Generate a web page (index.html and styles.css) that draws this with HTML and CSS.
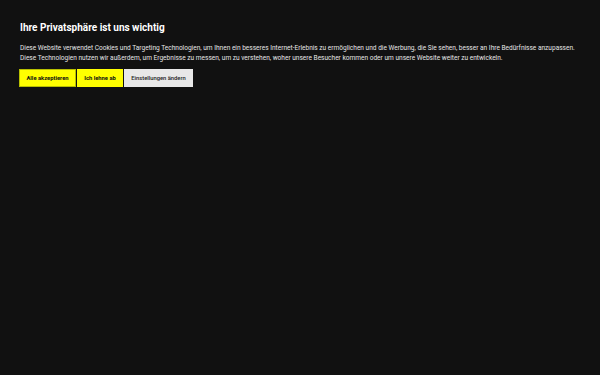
FILE: index.html
```html
<!DOCTYPE html>
<html lang="de">
<head>
<meta charset="utf-8">
<link rel="stylesheet" href="styles.css">
</head>
<body>
<div class="banner">
  <h1 class="title">Ihre Privatsphäre ist uns wichtig</h1>
  <p class="text">Diese Website verwendet Cookies und Targeting Technologien, um Ihnen ein besseres Internet-Erlebnis zu ermöglichen und die Werbung, die Sie sehen, besser an Ihre Bedürfnisse anzupassen.<br>Diese Technologien nutzen wir außerdem, um Ergebnisse zu messen, um zu verstehen, woher unsere Besucher kommen oder um unsere Website weiter zu entwickeln.</p>
  <div class="actions">
    <button class="btn btn-accept">Alle akzeptieren</button>
    <button class="btn btn-reject">Ich lehne ab</button>
    <button class="btn btn-settings">Einstellungen ändern</button>
  </div>
</div>
</body>
</html>
```
FILE: styles.css
```css
html, body {
  margin: 0;
  padding: 0;
  background: #111111;
  height: 100%;
}
body {
  font-family: Roboto, "Liberation Sans", sans-serif;
  color: #ffffff;
}
.banner {
  padding: 21px 20px 20px;
}
.title {
  margin: 0;
  font-size: 10px;
  font-weight: 700;
  line-height: 14px;
}
.text {
  margin: 8px 0 0;
  font-size: 6.56px;
  line-height: 10px;
  color: #e6e6e6;
  white-space: nowrap;
}
.actions {
  display: flex;
  gap: 1px;
  margin-top: 6px;
  margin-left: -1px;
}
.btn {
  font-family: Roboto, "Liberation Sans", sans-serif;
  font-size: 5.8px;
  font-weight: 700;
  height: 18px;
  padding: 0;
  border: 1px solid transparent;
  color: #111111;
  white-space: nowrap;
  text-align: center;
  cursor: pointer;
}
.btn-accept {
  background: #ffff00;
  border-color: #b8c000;
  width: 57px;
}
.btn-reject {
  background: #ffff00;
  width: 46px;
}
.btn-settings {
  background: #e8e8e8;
  color: #222222;
  font-weight: 500;
  width: 69px;
}
```
